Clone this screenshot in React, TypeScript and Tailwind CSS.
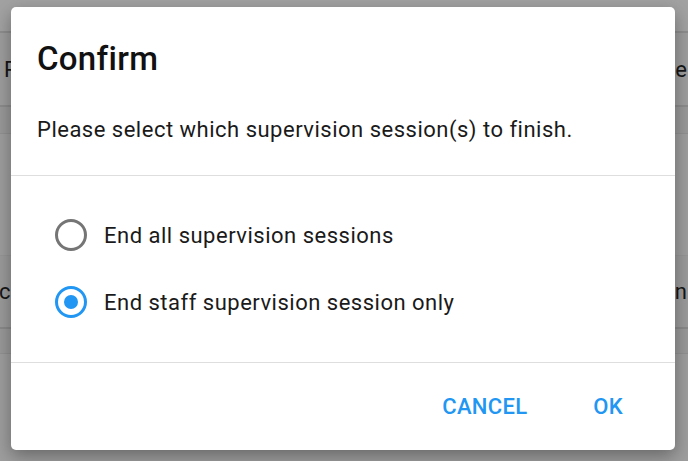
import { useState } from "react";

const OPTIONS = [
  { id: "all", label: "End all supervision sessions" },
  { id: "staff", label: "End staff supervision session only" },
];

function Radio({ checked }: { checked: boolean }) {
  return (
    <span
      className={
        checked
          ? "flex h-[32px] w-[32px] shrink-0 items-center justify-center rounded-full border-[3px] border-[#2196f3]"
          : "flex h-[32px] w-[32px] shrink-0 items-center justify-center rounded-full border-[3px] border-[#757575]"
      }
    >
      {checked && <span className="h-[14px] w-[14px] rounded-full bg-[#2196f3]" />}
    </span>
  );
}

export default function App() {
  const [selected, setSelected] = useState("staff");

  return (
    <div className="relative h-[461px] w-[688px] overflow-hidden bg-[#9e9e9e] font-['Roboto',_'Noto_Sans',_sans-serif]">
      {/* page behind the scrim */}
      <div className="flex flex-col text-[22px] text-[#161616]">
        <div className="h-[33px] border-b-2 border-[#8e8e8e] bg-[#a2a2a2]" />
        <div className="flex h-[74px] items-center justify-between border-b-2 border-[#8c8c8c] bg-[#9e9e9e] pl-[4px] pr-[1px]">
          <span>P</span>
          <span>e</span>
        </div>
        <div className="h-[27px] border-b border-[#919191] bg-[#999999]" />
        <div className="h-[122px] border-b border-[#969696] bg-[#9e9e9e]" />
        <div className="flex h-[73px] items-center justify-between border-b-2 border-[#8a8a8a] bg-[#9b9b9b] pr-[1px]">
          <span className="-ml-[1px]">cl</span>
          <span>n</span>
        </div>
        <div className="h-[25px] border-b border-[#919191] bg-[#999999]" />
        <div className="flex-1 bg-[#9e9e9e]" />
      </div>

      {/* dialog */}
      <div className="absolute left-[11px] top-[7px] flex h-[443px] w-[664px] flex-col rounded-[5px] bg-white shadow-[0_6px_18px_rgba(0,0,0,0.35)]">
        <h1 className="px-[26px] pt-[32px] text-[33px] font-medium leading-[40px] tracking-[0.3px] text-[#111111]">
          Confirm
        </h1>
        <p className="px-[26px] pt-[34px] pb-[29px] text-[22px] leading-[33px] tracking-[0.5px] text-[#1a1a1a]">
          Please select which supervision session(s) to finish.
        </p>
        <div className="h-px bg-[#dedede]" />
        <div className="flex flex-col gap-[19px] px-[44px] pt-[35px] pb-[36px]">
          {OPTIONS.map((o) => (
            <button
              key={o.id}
              onClick={() => setSelected(o.id)}
              className="flex h-[48px] items-center gap-[17px] text-left text-[22px] tracking-[0.5px] text-[#1a1a1a]"
            >
              <Radio checked={selected === o.id} />
              <span>{o.label}</span>
            </button>
          ))}
        </div>
        <div className="h-px bg-[#dedede]" />
        <div className="flex flex-1 items-center justify-end gap-[34px] pr-[36px]">
          <button className="px-[16px] text-[22px] font-medium tracking-[0.3px] text-[#2196f3]">CANCEL</button>
          <button className="px-[16px] text-[22px] font-medium tracking-[0.3px] text-[#2196f3]">OK</button>
        </div>
      </div>
    </div>
  );
}
